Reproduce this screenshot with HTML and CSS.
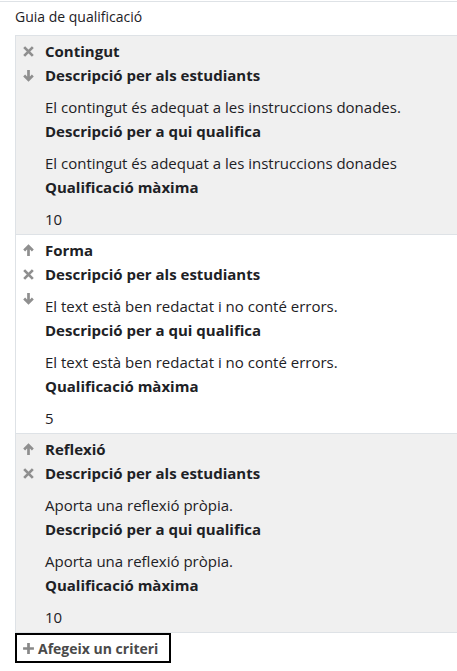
FILE: index.html
```html
<!DOCTYPE html>
<html lang="ca">

<head>
   <meta charset="UTF-8" />
   <meta name="viewport" content="width=device-width, initial-scale=1" />
   <title>Guia de qualificació</title>
   <link rel="stylesheet" href="styles.css">
</head>

<body>
   <div class="page">
      <div class="section-title">Guia de qualificació</div>

      <div class="criteria">
         <div class="criterion shaded">
            <div class="actions">
               <span class="icon"><svg viewBox="0 0 12 12"><path d="M2 2 L10 10 M10 2 L2 10" /></svg></span>
               <span class="icon"><svg viewBox="0 0 12 12"><path d="M6 1 V10 M2 6 L6 10 L10 6" /></svg></span>
            </div>
            <div class="name">Contingut</div>
            <div class="label">Descripció per als estudiants</div>
            <div class="value">El contingut és adequat a les instruccions donades.</div>
            <div class="label">Descripció per a qui qualifica</div>
            <div class="value">El contingut és adequat a les instruccions donades</div>
            <div class="label">Qualificació màxima</div>
            <div class="value">10</div>
         </div>

         <div class="criterion">
            <div class="actions">
               <span class="icon"><svg viewBox="0 0 12 12"><path d="M6 11 V2 M2 6 L6 2 L10 6" /></svg></span>
               <span class="icon"><svg viewBox="0 0 12 12"><path d="M2 2 L10 10 M10 2 L2 10" /></svg></span>
               <span class="icon"><svg viewBox="0 0 12 12"><path d="M6 1 V10 M2 6 L6 10 L10 6" /></svg></span>
            </div>
            <div class="name">Forma</div>
            <div class="label">Descripció per als estudiants</div>
            <div class="value">El text està ben redactat i no conté errors.</div>
            <div class="label">Descripció per a qui qualifica</div>
            <div class="value">El text està ben redactat i no conté errors.</div>
            <div class="label">Qualificació màxima</div>
            <div class="value">5</div>
         </div>

         <div class="criterion shaded">
            <div class="actions">
               <span class="icon"><svg viewBox="0 0 12 12"><path d="M6 11 V2 M2 6 L6 2 L10 6" /></svg></span>
               <span class="icon"><svg viewBox="0 0 12 12"><path d="M2 2 L10 10 M10 2 L2 10" /></svg></span>
            </div>
            <div class="name">Reflexió</div>
            <div class="label">Descripció per als estudiants</div>
            <div class="value">Aporta una reflexió pròpia.</div>
            <div class="label">Descripció per a qui qualifica</div>
            <div class="value">Aporta una reflexió pròpia.</div>
            <div class="label">Qualificació màxima</div>
            <div class="value">10</div>
         </div>
      </div>

      <button class="add-btn" type="button">
         <svg viewBox="0 0 12 12"><path d="M6 1 V11 M1 6 H11" /></svg>
         Afegeix un criteri
      </button>
   </div>
</body>

</html>
```

FILE: styles.css
```css
:root {
   --text: #1d2125;
   --border: #dee2e6;
   --shade: #f0f0f0;
   --icon: #8f8f8f;
}

* {
   box-sizing: border-box;
   margin: 0;
   padding: 0;
}

body {
   font-family: 'Open Sans', 'Noto Sans', sans-serif;
   font-size: 15px;
   color: var(--text);
   background: #ffffff;
}

.page {
   margin-top: 1px;
   border-top: 1px solid var(--border);
   padding-top: 4px;
}

.section-title {
   margin-left: 15px;
   font-size: 14px;
   line-height: 22px;
   height: 29px;
}

.criteria {
   margin-left: 15px;
   border-top: 1px solid var(--border);
   border-left: 1px solid var(--border);
}

.criterion {
   padding: 3px 0 3px 29px;
   border-bottom: 1px solid var(--border);
   line-height: 24px;
}

.criterion.shaded {
   background: var(--shade);
}

.actions {
   float: left;
   margin-left: -23px;
   width: 13px;
   display: flex;
   flex-direction: column;
}

.icon {
   height: 24px;
   display: flex;
   align-items: center;
   justify-content: center;
}

.icon svg {
   width: 13px;
   height: 13px;
   fill: none;
   stroke: var(--icon);
   stroke-width: 2.5;
}

.name,
.label {
   font-weight: 700;
}

.value {
   margin-top: 8px;
}

.add-btn {
   margin-left: 15px;
   display: flex;
   align-items: center;
   gap: 3px;
   height: 30px;
   padding: 0 11px 0 5px;
   border: 2px solid #000000;
   background: #ffffff;
   font-family: inherit;
   font-size: 14px;
   font-weight: 700;
   color: #4a4a4a;
}

.add-btn svg {
   width: 13px;
   height: 13px;
   fill: none;
   stroke: #888888;
   stroke-width: 2.5;
}
```
